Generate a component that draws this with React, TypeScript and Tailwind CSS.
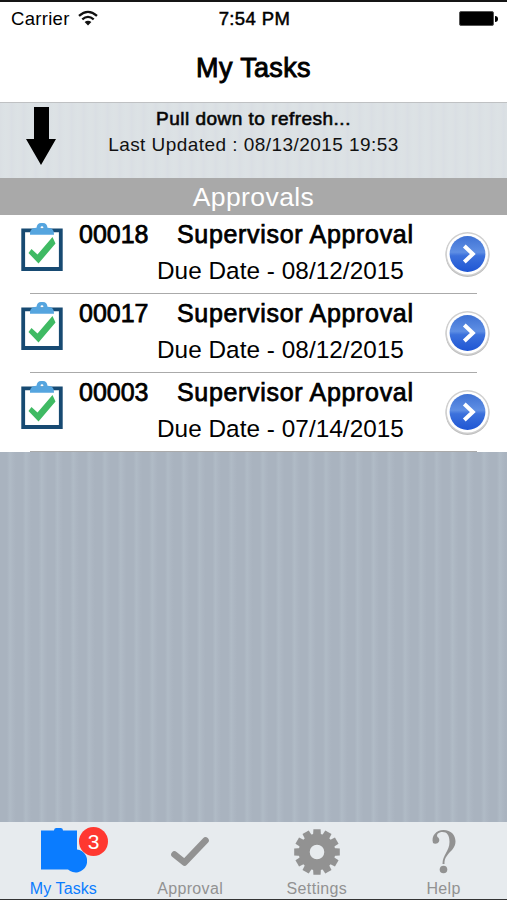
type Task = { id: string; title: string; due: string };

const tasks: Task[] = [
  { id: "00018", title: "Supervisor Approval", due: "08/12/2015" },
  { id: "00017", title: "Supervisor Approval", due: "08/12/2015" },
  { id: "00003", title: "Supervisor Approval", due: "07/14/2015" },
];

const teeth = [0, 30, 60, 90, 120, 150, 180, 210, 240, 270, 300, 330];

function WifiIcon() {
  return (
    <svg className="mb-[2px] ml-2 h-[16px] w-[20px]" viewBox="0 0 20 16" fill="none" stroke="#111" strokeWidth="2.3">
      <path d="M1 5.8Q10-2 19 5.8" />
      <path d="M4.3 9.4Q10 4.4 15.7 9.4" />
      <path d="M10 15.4L6.6 12Q10 9.4 13.4 12Z" fill="#111" stroke="none" />
    </svg>
  );
}

function ClipboardIcon() {
  return (
    <svg className="mt-[7px] h-[50px] w-[42px]" viewBox="0 0 42 50">
      <path d="M2.2 8.4H39.8V47H2.2Z" fill="#fff" stroke="#174a72" strokeWidth="3.8" />
      <path fillRule="evenodd" d="M9 12.8C9 8.5 10 6 15.5 5.8Q16 1 20 1H22Q26 1 26.5 5.8C32 6 33 8.5 33 12.8ZM21 4.2A1.4 1.4 0 1 0 21 7A1.4 1.4 0 1 0 21 4.2Z" fill="#55a5df" />
      <path d="M7.5 31L10.5 27L16.5 32.5L31.5 15L34.5 21.5L17.5 41.5Z" fill="#3fba63" />
    </svg>
  );
}

function DisclosureIcon() {
  return (
    <svg className="mt-[16px] h-[47px] w-[47px]" viewBox="0 0 47 47">
      <defs>
        <linearGradient id="disclosure" x1="0" y1="0" x2="0" y2="1">
          <stop offset="0" stopColor="#3f72d4" />
          <stop offset=".45" stopColor="#5f8fe4" />
          <stop offset=".55" stopColor="#3c71dc" />
          <stop offset="1" stopColor="#1f56d4" />
        </linearGradient>
      </defs>
      <circle cx="23.5" cy="24" r="22" fill="#bdbdbd" />
      <circle cx="23.5" cy="23" r="22" fill="#d0d0d0" />
      <circle cx="23.5" cy="23" r="20.6" fill="#fff" />
      <circle cx="23.5" cy="23" r="17.9" fill="url(#disclosure)" />
      <path d="M20.3 15L28.8 23L20.3 31" fill="none" stroke="#fff" strokeWidth="4" />
    </svg>
  );
}

function TaskRow({ task }: { task: Task }) {
  return (
    <li className="flex h-[79px] bg-white pl-[21px]">
      <ClipboardIcon />
      <div className="ml-[16px] w-[365px] text-black">
        <div className="flex h-[39px] items-center text-[25px] whitespace-nowrap [-webkit-text-stroke:0.75px_#000]">
          <span className="w-[98px]">{task.id}</span>
          <span className="tracking-[0.68px]">{task.title}</span>
        </div>
        <div className="pl-[78px] text-[24.3px] leading-[33px] tracking-[0.05px] whitespace-nowrap">Due Date - {task.due}</div>
      </div>
      <DisclosureIcon />
    </li>
  );
}

function MyTasksIcon() {
  return (
    <svg className="h-[46px] w-[46px]" viewBox="0 0 46 46" fill="#0a7cff">
      <path d="M0 2.5H13Q13 0 15 0H20Q22 0 22 2.5H36V21.5A11.5 11.5 0 1 1 27 41.5H0Z" />
    </svg>
  );
}

function ApprovalIcon() {
  return <svg className="h-[32px] w-[40px]" viewBox="0 0 40 32" fill="none" stroke="#929292" strokeWidth="6.6"><path d="M4.5 18.5L14.5 26.5L35.5 4.5" strokeLinecap="round" strokeLinejoin="round" /></svg>;
}

function SettingsIcon() {
  return (
    <svg className="h-[46px] w-[46px]" viewBox="-23 -23 46 46" fill="#929292">
      {teeth.map((angle) => <path key={angle} d="M-4-15L-3.6-22.8H3.6L4-15Z" transform={`rotate(${angle})`} />)}
      <circle r="12.8" fill="none" stroke="#929292" strokeWidth="11" />
    </svg>
  );
}

function HelpIcon() {
  return (
    <svg className="h-[45px] w-[26px]" viewBox="0 0 26 45" fill="#929292">
      <path d="M2 14C0 7 5 1 12.5 1C20 1 24.5 6 24.5 12.5C24.5 19 19.5 22 16.5 26C14 29.5 13.5 31 13.5 35H11.5C11.5 26 18.5 22 18.5 13C18.5 6 16 3 11.5 3C7.5 3 5 5.5 6.5 8C9.5 10 8.5 14 5.5 14.5Q3.5 15 2 14Z" />
      <circle cx="12.5" cy="40.5" r="3.8" />
    </svg>
  );
}

export default function App() {
  return (
    <main className="flex h-[900px] w-[507px] flex-col overflow-hidden bg-white font-['Liberation_Sans',Arial,sans-serif] text-black">
      <header className="h-[103px] border-t-2 border-b border-t-[#151515] border-b-[#bfc1c3] bg-white">
        <div className="grid h-[33px] grid-cols-3 items-center pr-[9px] pl-[11px] text-[18.5px] whitespace-nowrap">
          <div className="flex items-center"><span className="tracking-[0.3px]">Carrier</span><WifiIcon /></div>
          <span className="text-center tracking-[0.4px] [-webkit-text-stroke:0.5px_#000]">7:54 PM</span>
          <div className="flex items-center justify-end">
            <span className="h-[15px] w-[35px] rounded-[2px] border border-[#555] bg-black" />
            <span className="ml-px h-[6px] w-[3px] rounded-r-full bg-black" />
          </div>
        </div>
        <h1 className="mt-[13px] text-center text-[27px] leading-[40px] tracking-[0.35px] [-webkit-text-stroke:0.9px_#000]">My Tasks</h1>
      </header>

      <section className="flex h-[75px] bg-[repeating-linear-gradient(90deg,#dadfe3_0px,#dce2e5_5px,#dce1e4_9px,#d9dee4_12px)] pl-[26px]">
        <svg className="mt-[4px] h-[59px] w-[30px]" viewBox="0 0 30 59"><path d="M8 0H23V32H30L15 58L0 32H8Z" /></svg>
        <div className="ml-[51px] flex w-[293px] flex-col items-center whitespace-nowrap">
          <p className="mt-[3px] text-[19px] leading-[26px] tracking-[0.48px] [-webkit-text-stroke:0.65px_#111]">Pull down to refresh...</p>
          <p className="text-[19px] leading-[25px] tracking-[0.45px] text-[#111]">Last Updated : 08/13/2015 19:53</p>
        </div>
      </section>
      <h2 className="h-[37px] bg-[#a9a9a9] text-center text-[26.5px] leading-[39px] tracking-[0.4px] text-white">Approvals</h2>

      <section className="grow bg-[repeating-linear-gradient(90deg,#a9b3bf_0px,#a9b3bf_7px,#b0bbc6_10px,#acb6c2_13px,#a9b3bf_15.8px)]">
        <ul className="relative">
          {tasks.map((task) => <TaskRow key={task.id} task={task} />)}
          {tasks.map((task, index) => (
            <li key={`${task.id}-divider`} className="absolute left-[30px] h-[1.5px] w-[447px] bg-[#aaa]" style={{ top: (index + 1) * 79 - 1.5 }} />
          ))}
        </ul>
      </section>

      <nav className="grid h-[78px] grid-cols-4 border-b border-[#333] bg-[#e7ebee] text-center text-[16px] leading-[22px] whitespace-nowrap text-[#929292]">
        <div className="relative text-[#0a7cff]">
          <div className="flex h-[56px] items-center pt-[2px] pl-[41px]"><MyTasksIcon /></div>
          <span className="absolute top-[5px] left-[79px] h-[29px] w-[29px] rounded-full bg-[#ff3830] text-[21px] leading-[29px] text-white">3</span>
          <div className="tracking-[0.1px]">My Tasks</div>
        </div>
        <div><div className="flex h-[56px] items-center justify-center pt-[4px]"><ApprovalIcon /></div><div className="tracking-[0.35px]">Approval</div></div>
        <div><div className="flex h-[56px] items-center justify-center pt-[4px]"><SettingsIcon /></div><div className="tracking-[0.35px]">Settings</div></div>
        <div><div className="flex h-[56px] items-center justify-center pt-[3px]"><HelpIcon /></div><div className="tracking-[0.35px]">Help</div></div>
      </nav>
    </main>
  );
}
